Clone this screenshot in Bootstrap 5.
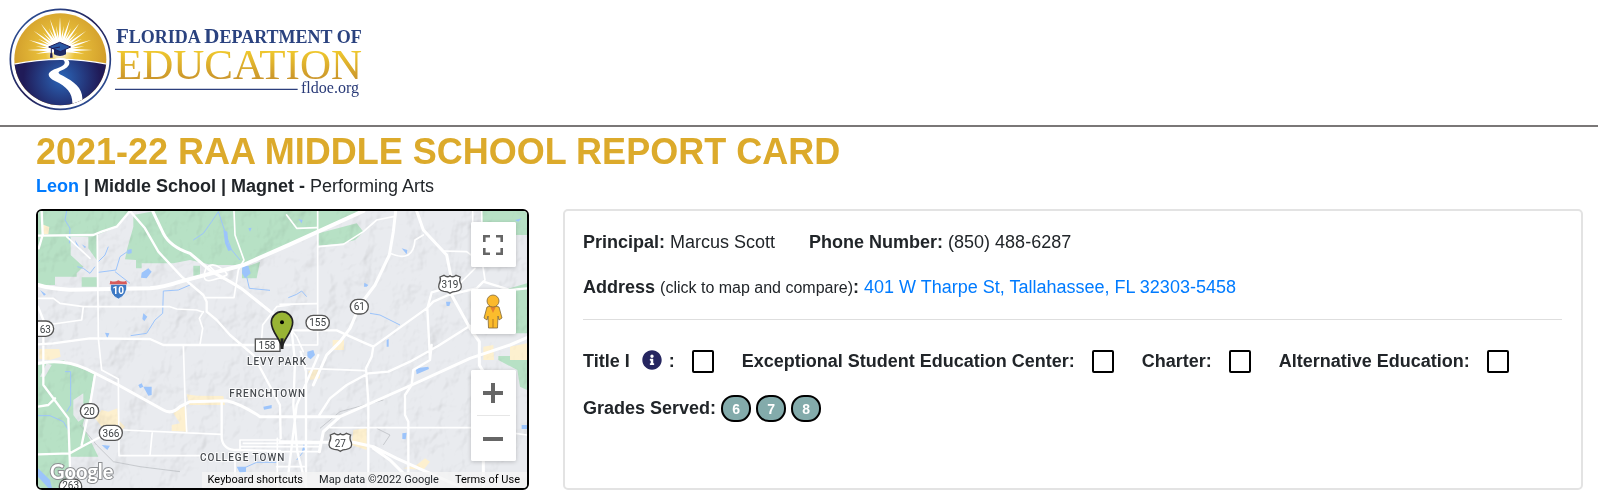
<!DOCTYPE html>
<html lang="en">
<head>
<meta charset="utf-8">
<meta name="viewport" content="width=device-width, initial-scale=1">
<title>2021-22 Raa Middle School Report Card</title>
<link href="https://cdn.jsdelivr.net/npm/bootstrap@5.3.0/dist/css/bootstrap.min.css" rel="stylesheet">
<style>
  body { font-family: "Liberation Sans", Arial, sans-serif; font-size: 18px; line-height: 27px; color: #212529; }
  a { color: #007bff; text-decoration: none; }
  .site-header { border-bottom: 2px solid #7a7777; padding-bottom: 5px; }
  .report { padding: 3px 15px 13px 36px; }
  .report-title { font-size: 36px; line-height: 43px; color: #dcaa2b; }
  .report-sub { margin-bottom: 9px; }
  .panels { display: grid; grid-template-columns: 29fr 60fr; gap: 34px; }
  .map-box { border: 2px solid #000; border-radius: 6px; min-height: 281px; background: #e8eaed; }
  .map-box .terrain { position: absolute; inset: 0; width: 100%; height: 100%; }
  .map-tools { position: absolute; top: 11px; right: 11px; bottom: 27px; width: 45px; }
  .tool-btn { width: 45px; height: 45px; padding: 0 1px 0 0; border: 0; background: #fff; display: flex; align-items: center; justify-content: center; }
  .tool-face { background: #fff; border-radius: 2px; box-shadow: 0 1px 4px rgba(0,0,0,.2); overflow: hidden; }
  .tool-street { margin-top: 22px; }
  .tool-rule { height: 1px; margin: 0 6px; background: #e6e6e6; }
  .map-credit { position: absolute; right: 0; bottom: 0; height: 16px; padding: 0 7px 0 6px; gap: 16px; background: rgba(245,245,245,.8); font: 11px/16px Roboto, sans-serif; border-bottom-right-radius: 4px; }
  .map-credit button, .map-credit a { border: 0; padding: 0; background: none; color: #000; }
  .info-card { border: 2px solid #e3e3e3; border-radius: 5px; padding: 18px 19px 22px 18px; }
  .info-card hr { margin: 18px 0 28px; border-top: 1px solid #dedede; opacity: 1; }
  .facts { column-gap: 34px; margin-bottom: 18px; }
  .flags { column-gap: 28px; }
  .hint { font-size: 16px; }
  .flag { gap: 17px; }
  .tick { appearance: none; width: 22px; height: 23px; margin: 0; border: 2px solid #000; border-radius: 2px; background: #fff; }
  .tick:checked { background: #262660; }
  .tip { border: 0; padding: 0; background: none; display: flex; margin: 0 7px 3px 12px; }
  .grades { gap: 5px; margin-top: 20px; }
  .grade { width: 30px; height: 27px; border: 2px solid #000; border-radius: 13px; background: #83abab; color: #fff; font-size: 14px; line-height: 25px; text-align: center; }
</style>
</head>
<body>
<header class="site-header">
  <a href="#" aria-label="Florida Department of Education">
  <svg width="370" height="120" viewBox="0 0 370 120" class="d-block">
    <defs>
      <linearGradient id="gold" x1="0" y1="0" x2="0" y2="1"><stop offset=".2" stop-color="#f0c92e"/><stop offset=".85" stop-color="#c8922b"/></linearGradient>
      <radialGradient id="sun" gradientUnits="userSpaceOnUse" cx="180" cy="155" r="150"><stop offset="0" stop-color="#fff"/><stop offset=".3" stop-color="#ecc43c"/><stop offset="1" stop-color="#cf9a2a"/></radialGradient>
      <radialGradient id="land" gradientUnits="userSpaceOnUse" cx="185" cy="235" r="115"><stop offset="0" stop-color="#2b66b8"/><stop offset="1" stop-color="#201b58"/></radialGradient>
      <linearGradient id="ring" x1="0" y1="0" x2="1" y2="1"><stop offset="0" stop-color="#2e5ba6"/><stop offset=".5" stop-color="#232057"/><stop offset="1" stop-color="#2e5ba6"/></linearGradient>
      <clipPath id="disc"><circle cx="181" cy="178" r="138"/></clipPath>
      <path id="ray" d="M174 150 180 52 186 150z"/>
      <path id="rayS" d="M175 150 180 76 185 150z"/>
    </defs>
    <g transform="scale(.33333)">
      <circle cx="181" cy="178" r="150" fill="#fff" stroke="url(#ring)" stroke-width="5"/>
      <g clip-path="url(#disc)">
        <rect x="40" y="35" width="285" height="290" fill="url(#sun)"/>
        <g fill="#fff">
          <use href="#ray"/><use href="#rayS" transform="rotate(9 180 150)"/><use href="#ray" transform="rotate(18 180 150)"/><use href="#rayS" transform="rotate(27 180 150)"/><use href="#ray" transform="rotate(36 180 150)"/><use href="#rayS" transform="rotate(45 180 150)"/><use href="#ray" transform="rotate(54 180 150)"/><use href="#rayS" transform="rotate(63 180 150)"/><use href="#ray" transform="rotate(72 180 150)"/><use href="#rayS" transform="rotate(81 180 150)"/><use href="#ray" transform="rotate(90 180 150)"/><use href="#rayS" transform="rotate(99 180 150)"/>
          <use href="#rayS" transform="rotate(-9 180 150)"/><use href="#ray" transform="rotate(-18 180 150)"/><use href="#rayS" transform="rotate(-27 180 150)"/><use href="#ray" transform="rotate(-36 180 150)"/><use href="#rayS" transform="rotate(-45 180 150)"/><use href="#ray" transform="rotate(-54 180 150)"/><use href="#rayS" transform="rotate(-63 180 150)"/><use href="#ray" transform="rotate(-72 180 150)"/><use href="#rayS" transform="rotate(-81 180 150)"/><use href="#ray" transform="rotate(-90 180 150)"/><use href="#rayS" transform="rotate(-99 180 150)"/>
        </g>
        <path d="M40 193Q180 163 325 193V330H40z" fill="url(#land)" stroke="#fff" stroke-width="4"/>
        <path d="M160 178Q182 170 202 178C216 190 204 206 182 212 170 217 176 222 190 228 222 246 250 264 247 302L216 324C222 284 205 262 165 243 136 229 143 214 168 206 192 199 200 188 190 180z" fill="#fff"/>
      </g>
      <path d="M162 144V163Q180 173 198 163V144z" fill="#1e2a66"/>
      <path d="M146 141 179 127 212 141 181 155z" fill="#2a58a5" stroke="#1f1c57" stroke-width="3"/>
      <path d="M180 141 154 146V163" fill="none" stroke="#1f1c57" stroke-width="3"/><path d="M151 160H157L158 173H150z" fill="#1f1c57"/>
      <path d="M345 268H893" stroke="#2c3f7c" stroke-width="4"/>
    </g>
    <g font-family="'Liberation Serif', serif">
      <text x="116" y="43" font-size="18" font-weight="700" fill="#2a427f" xml:space="preserve"><tspan font-size="21">F</tspan>LORIDA <tspan font-size="21">D</tspan>EPARTMENT OF</text>
      <text x="116" y="79" font-size="43" fill="url(#gold)">EDUCATION</text>
      <text x="301" y="93" font-size="16" fill="#2a3b78">fldoe.org</text>
    </g>
  </svg>
  </a>
</header>

<main class="report">
  <h1 class="report-title fw-bold mb-0">2021-22 RAA MIDDLE SCHOOL REPORT CARD</h1>
  <p class="report-sub"><b><a href="#">Leon</a> | Middle School | Magnet -</b> Performing Arts</p>

  <div class="panels">
    <section class="map-box position-relative overflow-hidden" aria-label="Map">
      <svg class="terrain" viewBox="24 18 1467 831" preserveAspectRatio="xMidYMid slice">
        <defs>
          <filter id="relief" x="0" y="0" width="1" height="1">
            <feTurbulence type="fractalNoise" baseFrequency=".011 .009" numOctaves="4" seed="8"/>
            <feDiffuseLighting surfaceScale="22" lighting-color="#fff" diffuseConstant="1.3"><feDistantLight azimuth="225" elevation="52"/></feDiffuseLighting>
          </filter>
        </defs>
        <rect x="24" y="18" width="1467" height="831" fill="#e9ebef"/>
        <!-- parks and woodland -->
        <g fill="#b7e1c5">
          <path d="M24 18H300L262 66 200 90V95H122V150L160 185 140 205V215H75V240H24zM155 217H200V245H155zM175 95H200V165L175 130z"/>
          <path d="M310 30 375 18H990L866 75 750 130 650 180H545L480 165 430 175 335 175V190H318V165L285 163 292 130 310 65z"/>
          <path d="M866 85 980 55 1000 80 975 105 940 115 866 122zM490 182H510V212H490zM636 190 690 170 680 220H636zM1355 18H1491V90H1355zM1430 252 1491 235V385H1430zM1405 453H1491V555L1470 545 1462 495 1405 465z"/>
          <path d="M24 480 100 466 192 508 180 580 158 660 205 755H120L115 849H24z"/>
        </g>
        <path d="M130 585 160 565V640L145 650 130 630zM30 515 50 475 65 480 45 515z" fill="#e6e9ec"/>
        <g fill="#fdf0cf">
          <path d="M36 58 58 66 55 88H38zM28 432H88L92 455 60 465 28 462zM195 640 215 615 235 620 262 610 265 645 285 665 270 680 215 665zM470 568 500 572 580 573 585 600H478zM430 625 468 600 472 680 425 678V660L450 655zM908 405H942V435H908zM1360 425 1390 420 1392 465H1360zM1440 425 1491 415V465H1440zM835 498 868 490 870 520 840 525zM970 675 1010 670V735L965 720zM1160 780 1185 760 1200 770 1180 795 1120 790z"/>
        </g>
        <rect x="24" y="18" width="1467" height="831" filter="url(#relief)" opacity=".17" style="mix-blend-mode:multiply"/>
        <!-- lakes and creeks -->
        <g fill="#9cc4fb">
          <path d="M335 203 355 190 365 200 350 220 333 218zM580 75 592 80 595 115 605 135 595 138 585 115zM637 185 655 182 662 205 645 220 636 205zM292 135 305 132 305 145 292 147zM135 105 150 130 140 125zM155 118 168 125 165 130zM1003 233 1015 240 1010 245H1002zM340 325 352 335 343 348 337 342zM225 383 238 385 232 400zM340 545H365V570L355 572zM700 605 725 600V610L702 614zM325 540 335 535 340 545 330 550zM620 785H648V800L630 805zM24 790 60 825 66 849H55L24 815zM832 440 850 435 855 450 842 463 832 455zM1157 490 1195 485 1197 492 1160 508zM1117 685 1130 683 1127 703 1117 702zM1248 290 1262 290 1258 303H1250zM815 740 822 715 825 735zM1115 130 1132 135 1130 148zM1070 405 1076 402V425H1070zM1455 45 1475 40 1465 50zM1475 660H1491V672H1475zM30 255 48 268 42 272zM215 720 240 722 232 735zM1400 530 1408 525V535zM655 70 665 68 660 80zM805 42 818 45 815 55z"/>
        </g>
        <g fill="none" stroke="#9cc4fb" stroke-width="3" stroke-linejoin="round">
          <path d="M292 140 270 155 258 195 205 202M142 185 160 190 180 205 195 185M565 20 545 50 520 85 490 105M565 20 590 95 605 135 630 165M650 215 658 250 720 256M480 240 445 255 400 258 398 325 375 345 350 385 302 392M110 18 105 45 120 70 118 115M24 632 60 632 100 650 115 675M105 500 122 500V600L110 620M775 278 800 268 815 258 830 275M1020 325 1050 330 1080 345 1110 360M255 200 300 235M205 170 225 150 235 125M640 790 680 772 740 772M820 740 800 765"/>
        </g>
        <g fill="none" stroke="#b5b8bd" stroke-width="2">
          <path d="M150 660 200 720 250 770 330 785 450 800M870 670 930 620 1060 585M1040 670 1080 690 1060 720"/>
        </g>
        <!-- roads -->
        <g fill="none" stroke="#fff" stroke-linejoin="round" stroke-linecap="round" stroke-width="5">
          <path d="M202 90 205 400 215 495 265 522 267 752H520M24 280H70L90 295 160 305H420L440 312 500 315 520 322M160 305 155 345 70 357H24M520 320 508 340 518 370 510 418M525 278H612L625 195 642 165 615 90 612 18M460 420 465 580 470 680M280 675 575 688M630 705H750M630 705V735M367 680 360 750M615 755V849M742 700V849M740 740H870M740 785H825M863 18V420H780M750 298 860 296M830 490 1005 497M865 125 940 118 1000 80 1040 45 1090 35M770 30 800 70 860 68M1080 145Q1150 175 1155 105L1180 90M1240 138 1310 140 1350 170M1335 190 1290 235M785 376 800 395 820 440M900 668H1330L1491 690M1355 18 1358 180 1365 225 1340 250M695 400 698 360 740 305 780 300M640 715H870M630 725H870M1328 18V60M110 95 180 160"/>
          <g stroke-width="7">
            <path d="M24 92 190 90 215 80 260 65 300 18M300 18 345 70 385 140 455 215 520 270 530 290V320L560 345 600 390 670 450 750 600 752 700M24 418 70 415 180 400 360 402 400 420H780M35 18 38 90 26 130M24 305 40 345V540L115 640 122 849M24 748 120 745 155 725 240 680M195 510 180 600 155 720M24 605 55 600 75 580M575 590V700Q580 735 620 735L750 738M785 376H920L1000 412 1030 425 1025 455 1008 490 1015 590V849M1030 425 1190 310 1210 290 1255 270 1340 250 1360 230 1440 255 1491 250M1200 465 1192 310 1205 262 1230 255M868 630 900 580 950 540 1015 505 1075 500 1140 470 1225 422 1320 362M1205 420 1200 465 1150 495 1145 540 1125 570V630L1135 650V849M785 376 795 470 790 600 802 740 830 849M812 440 828 500V849M865 450 800 600 770 849"/>
          </g>
          <g stroke-width="9">
            <path d="M368 18 400 85Q420 125 480 145L545 200Q620 240 640 255L740 335M24 475Q100 460 170 492L265 540 400 615Q425 630 450 605L480 590 590 587Q630 595 690 635H930L1010 600 1145 540 1320 460 1440 420 1491 398M1097 18 1090 80 1078 150 1035 240 990 300 960 370 930 410 890 450 850 540M1160 18 1180 75 1250 150 1262 210V265L1320 370 1348 410V480L1360 500V849M930 635 880 680 868 740M750 710 860 712H970L1030 725 1100 760 1200 805 1300 849M1030 730 1080 765 1130 815"/>
          </g>
          <path d="M24 240Q60 252 120 254L360 250Q400 247 450 230L640 180 780 118 1000 18" stroke-width="12"/>
          <path d="M528 190Q545 170 570 188T590 210 548 225 528 190M540 185 575 220"/>
        </g>
        <!-- route shields -->
        <g fill="#fff" stroke="#555" stroke-width="4">
          <rect x="0" y="348" width="71" height="46" rx="23"/><rect x="828" y="331" width="70" height="44" rx="22"/><rect x="961" y="283" width="54" height="44" rx="22"/>
          <rect x="151" y="596" width="55" height="44" rx="22"/><rect x="208" y="661" width="69" height="45" rx="22"/><rect x="88" y="822" width="67" height="44" rx="22"/>
          <rect x="676" y="402" width="74" height="37"/>
          <path id="us" d="M1230 216 1242 211Q1252 219 1260 212 1269 219 1278 211L1291 216Q1286 226 1293 238 1298 256 1278 259 1267 259 1260 265 1253 259 1242 259 1222 256 1227 238 1234 226 1230 216z"/>
          <use href="#us" transform="translate(-329 474)"/>
        </g>
        <path d="M242 238H290Q293 270 265 282 237 270 242 238z" fill="#3d79c4" stroke="#fff" stroke-width="2"/>
        <path d="M241 227Q254 233 265 226 277 233 289 227L291 238H239z" fill="#d75a5a"/>
        <g font-family="Roboto, sans-serif" font-size="30" text-anchor="middle" fill="#3c4043">
          <text x="46" y="383">63</text><text x="863" y="364">155</text><text x="988" y="316">61</text><text x="178" y="629">20</text><text x="243" y="695">366</text><text x="122" y="852">263</text><text x="711" y="432">158</text><text x="1260" y="249">319</text><text x="931" y="725">27</text>
          <text x="265" y="268" font-weight="700" fill="#fff">10</text>
        </g>
        <g font-family="Roboto, sans-serif" font-size="30" font-weight="500" fill="#474b50" stroke="#fff" stroke-width="5" paint-order="stroke" letter-spacing="3" text-anchor="middle">
          <text x="741" y="479">LEVY PARK</text><text x="713" y="576">FRENCHTOWN</text><text x="638" y="768">COLLEGE TOWN</text>
        </g>
        <!-- school pin -->
        <path d="M756 432C754 400 724 385 724 352A32 32 0 0 1 788 352C788 385 758 400 756 432z" fill="#98b434" stroke="#222" stroke-width="5"/>
        <path d="M756 400V432" stroke="#222" stroke-width="9"/><circle cx="756" cy="352" r="6"/>
        <text x="60" y="822" font-family="Lato, sans-serif" font-size="60" font-weight="700" fill="#fff" stroke="#8d8f92" stroke-width="6" paint-order="stroke">Google</text>
      </svg>
      <div class="map-tools d-flex flex-column">
        <div class="tool-face"><button class="tool-btn" type="button" aria-label="Toggle fullscreen view">
          <svg width="20" height="20" viewBox="0 0 20 20" fill="none" stroke="#666" stroke-width="2.6"><path d="M1.3 7V1.3H7M13 1.3h5.7V7M18.7 13v5.7H13M7 18.7H1.3V13"/></svg>
        </button></div>
        <div class="tool-face tool-street mb-auto"><button class="tool-btn" type="button" aria-label="Open Street View">
          <svg width="20" height="36" viewBox="0 0 20 36"><path d="M4 13Q10 10 16 13L19 24 16 26 15 22 14.500 34H5.500L5 22 4 26 1 24z" fill="#fbbc2c" stroke="#80683c" stroke-width=".8"/><path d="M7 12.500H13L10 19z" fill="#e8822e"/><path d="M10 25V34" stroke="#b47920"/><circle cx="10" cy="7" r="6" fill="#fbb92c" stroke="#80683c" stroke-width=".8"/></svg>
        </button></div>
        <div class="tool-face">
          <button class="tool-btn" type="button" aria-label="Zoom in"><svg width="20" height="20"><path d="M0 10H20M10 0V20" stroke="#666" stroke-width="4"/></svg></button>
          <div class="tool-rule"></div>
          <button class="tool-btn" type="button" aria-label="Zoom out"><svg width="20" height="20"><path d="M0 10H20" stroke="#666" stroke-width="4"/></svg></button>
        </div>
      </div>
      <div class="map-credit d-flex text-nowrap"><button type="button">Keyboard shortcuts</button><span>Map data ©2022 Google</span><a href="#">Terms of Use</a></div>
    </section>

    <section class="info-card">
      <div class="facts d-flex flex-wrap"><span><b>Principal:</b> Marcus Scott</span><span><b>Phone Number:</b> (850) 488-6287</span></div>
      <div><b>Address</b> <span class="hint">(click to map and compare)</span><b>:</b> <a href="#">401 W Tharpe St, Tallahassee, FL 32303-5458</a></div>
      <hr>
      <div class="flags d-flex flex-wrap fw-bold">
        <div class="flag d-flex align-items-center">
          <div class="d-flex align-items-center"><label for="title1">Title I</label>
            <button class="tip" type="button" aria-label="About Title I"><svg width="20" height="20" viewBox="0 0 512 512" fill="#262660"><path d="M256 8C119.043 8 8 119.083 8 256c0 136.997 111.043 248 248 248s248-111.003 248-248C504 119.083 392.957 8 256 8zm0 110c23.196 0 42 18.804 42 42s-18.804 42-42 42-42-18.804-42-42 18.804-42 42-42zm56 254c0 6.627-5.373 12-12 12h-88c-6.627 0-12-5.373-12-12v-24c0-6.627 5.373-12 12-12h12v-64h-12c-6.627 0-12-5.373-12-12v-24c0-6.627 5.373-12 12-12h64c6.627 0 12 5.373 12 12v100h12c6.627 0 12 5.373 12 12v24z"/></svg></button>:</div>
          <input class="tick" type="checkbox" id="title1">
        </div>
        <div class="flag d-flex align-items-center"><label for="ese">Exceptional Student Education Center:</label><input class="tick" type="checkbox" id="ese"></div>
        <div class="flag d-flex align-items-center"><label for="charter">Charter:</label><input class="tick" type="checkbox" id="charter"></div>
        <div class="flag d-flex align-items-center"><label for="alt">Alternative Education:</label><input class="tick" type="checkbox" id="alt"></div>
      </div>
      <div class="grades d-flex align-items-center fw-bold"><span>Grades Served:</span><span class="grade">6</span><span class="grade">7</span><span class="grade">8</span></div>
    </section>
  </div>
</main>
<script src="https://cdn.jsdelivr.net/npm/bootstrap@5.3.0/dist/js/bootstrap.bundle.min.js"></script>
</body>
</html>
